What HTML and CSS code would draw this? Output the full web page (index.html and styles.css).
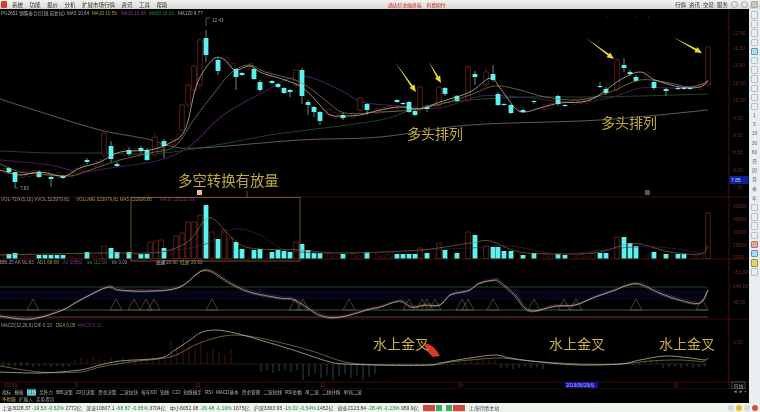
FILE: index.html
```html
<!DOCTYPE html>
<html lang="zh-CN">
<head>
  <meta charset="UTF-8" />
  <title>通达信金融终端</title>
  <link rel="stylesheet" href="styles.css">
</head>
<body>

  <!-- 顶部菜单 -->
  <header class="titlebar">
    <span class="app-logo"></span>
    <nav class="menu">
      <a>系统</a><a>功能</a><a>报价</a><a>分析</a><a>扩展市场行情</a><a>资讯</a><a>工具</a><a>帮助</a>
    </nav>
    <div class="title-center">通达信金融终端　利费期付</div>
    <nav class="menu-right">
      <a>行情</a><a>资讯</a><a>交易</a><a>服务</a>
    </nav>
    <div class="win-buttons">
      <span class="win-btn"></span><span class="win-btn"></span><span class="win-btn win-close"></span>
    </div>
  </header>

  <div class="main">
    <div class="left-col">
      <!-- K线图, 坐标直接用截图的像素 -->
      <svg id="chart" class="chart" viewBox="0 9 749 380" width="749" height="380"></svg>

      <div class="tabs">
        <div class="tab-row">
          <a>指标</a><a>模板</a><a class="on">短线</a><a>另外力</a><a>BBI决策</a><a>20日决策</a><a>资金决策</a><a>二波加快</a><a>每年KD</a><a>铂线</a><a>CCI</a><a>短线操手</a><a>RSI</a><a>MACD基本</a><a>资金管理</a><a>二波短线</a><a>RSI金额</a><a>单二波</a><a>二线并购</a><a>单纯二波</a>
        </div>
        <div class="tab-row">
          <a class="warn">不停服</a><a>扩展入</a><a>买卖提示</a>
        </div>
        <div class="period-nav">◄ ► ▪</div>
      </div>
    </div>

    <!-- 右侧工具条 -->
    <aside class="toolbar">
      <i class="tool"></i><i class="tool"></i><i class="tool"></i><i class="tool"></i><i class="tool tool-blue"></i><i class="tool"></i><i class="tool"></i><i class="tool"></i><i class="tool"></i><i class="tool"></i><i class="tool"></i>
      <b>1</b><b>5</b><b>15</b><b>30</b><b>60</b>
      <b>日</b><b>周</b><b>月</b><b>季</b><b>年</b>
      <i class="tool"></i><i class="tool"></i><i class="tool"></i>
      <i class="tool"></i><i class="tool tool-red"></i><i class="tool tool-blue"></i><i class="tool tool-yellow"></i><i class="tool"></i>
    </aside>
  </div>

  <!-- 底部指数 -->
  <footer class="statusbar">
    <span class="idx">上证3028.37 <em>-19.53</em> <em>-0.62%</em> 2772亿</span>
    <span class="idx">深证10607.1 <em>-68.87</em> <em>-0.65%</em> 3704亿</span>
    <span class="idx">中小6052.08 <em>-26.48</em> <em>-1.10%</em> 1675亿</span>
    <span class="idx">沪深3363.95 <em>-16.02</em> <em>-0.54%</em> 1452亿</span>
    <span class="idx">创业2123.84 <em>-28.46</em> <em>-1.23%</em> 959.9亿</span>
    <span class="mini-bars"><u class="up"></u><u class="down"></u></span>
    <span class="mini-bars"><u class="down"></u><u class="up"></u></span>
    <span class="idx">上海行情主站</span>
    <span class="tray"><i></i><i class="y"></i><i></i><i class="r"></i></span>
  </footer>

  <script src="chart.js"></script>
</body>
</html>
```

FILE: styles.css
```css
* {
  box-sizing: border-box;
}

html, body {
  margin: 0;
  padding: 0;
  width: 760px;
  height: 412px;
  overflow: hidden;
  background: #000;
}

body {
  display: flex;
  flex-direction: column;
  font-family: "Liberation Sans", "Noto Sans CJK SC", sans-serif;
  font-size: 5.5px;
}

.titlebar {
  height: 9px;
  display: flex;
  align-items: center;
  background: linear-gradient(#f2f2f0, #d8d8d4);
  color: #333;
  white-space: nowrap;
  filter: blur(0.35px);
}

.app-logo {
  width: 6px;
  height: 7px;
  margin: 0 5px 0 1px;
  background: #d8402c;
  border-radius: 1px;
}

.menu {
  display: flex;
  gap: 6.5px;
  width: 376px;
}

.title-center {
  width: 287px;
  font-size: 4.8px;
  color: #d0281c;
}

.menu-right {
  display: flex;
  gap: 3px;
}

.win-buttons {
  display: flex;
  gap: 3px;
  margin-left: 3px;
}

.win-btn {
  width: 7px;
  height: 7px;
  border: 1px solid #aaa;
  border-radius: 50%;
}

.win-close {
  border-radius: 1px;
  background: #c4c4c4;
}

.main {
  flex: 1;
  display: flex;
  min-height: 0;
}

.left-col {
  width: 749px;
  display: flex;
  flex-direction: column;
}

.chart {
  display: block;
  filter: blur(0.45px);
}

.legend {
  font-size: 4.6px;
}

.tabs {
  flex: 1;
  padding-left: 2px;
  background: #000;
  color: #b4b4b4;
  font-size: 4.6px;
  position: relative;
  filter: blur(0.3px);
}

.tab-row {
  display: flex;
  gap: 3.2px;
  height: 7px;
  line-height: 7px;
  white-space: nowrap;
}

.tab-row .on {
  background: #1c8c96;
  color: #e8ffff;
}

.tab-row .warn {
  color: #c8b84a;
}

.period-nav {
  position: absolute;
  top: 0;
  left: 733px;
  color: #999;
}

.toolbar {
  width: 11px;
  display: flex;
  flex-direction: column;
  align-items: center;
  gap: 1.7px;
  padding-top: 2px;
  background: #e8eef2;
  color: #666;
  filter: blur(0.5px);
}

.toolbar b {
  height: 7.5px;
  line-height: 7.5px;
  font-weight: normal;
  font-size: 5px;
}

.tool {
  width: 7px;
  height: 7.5px;
  border: 1px solid #b8c0c8;
  border-radius: 1px;
}

.tool-blue {
  border-color: #5a9ac0;
  background: #b4d8ec;
}

.tool-red {
  border-color: #b87060;
  background: #dcaca0;
}

.tool-yellow {
  border-color: #a89030;
  background: #e8d070;
}

.statusbar {
  height: 9px;
  display: flex;
  align-items: center;
  gap: 4px;
  padding-left: 2px;
  background: #eef3ee;
  color: #333;
  font-size: 5.1px;
  white-space: nowrap;
  filter: blur(0.3px);
}

.idx em {
  font-style: normal;
  color: #1a8a3a;
}

.mini-bars {
  display: flex;
  gap: 1px;
  width: 19px;
  height: 6px;
}

.mini-bars u {
  display: block;
  height: 100%;
}

.mini-bars .up {
  flex: 2;
  background: #d8463a;
}

.mini-bars .down {
  flex: 1;
  background: #3aa860;
}

.tray {
  display: flex;
  gap: 2px;
  margin-left: auto;
  padding-right: 2px;
}

.tray i {
  width: 6px;
  height: 6px;
  border-radius: 50%;
  background: #d8d8d8;
}

.tray .y {
  background: #d8c030;
}

.tray .r {
  background: #d85040;
}
```

FILE: chart.js
```js
const svg = document.getElementById("chart");
let out = "";

function rect(x, y, w, h, fill, stroke) {
  out += `<rect x="${x}" y="${y}" width="${w}" height="${h}" fill="${fill}"` +
    (stroke ? ` stroke="${stroke}" stroke-width="0.7"` : "") + "/>";
}
function line(x1, y1, x2, y2, color, w) {
  out += `<line x1="${x1}" y1="${y1}" x2="${x2}" y2="${y2}" stroke="${color}" stroke-width="${w || 0.7}"/>`;
}
// 均线用平滑曲线
function poly(p, color, w) {
  let d = `M${p[0][0]} ${p[0][1]}`;
  for (let i = 0; i < p.length - 1; i++) {
    const a = p[i - 1] || p[i], b = p[i], c = p[i + 1], e = p[i + 2] || c;
    const c1x = b[0] + (c[0] - a[0]) / 6, c1y = b[1] + (c[1] - a[1]) / 6;
    const c2x = c[0] - (e[0] - b[0]) / 6, c2y = c[1] - (e[1] - b[1]) / 6;
    d += ` C${c1x.toFixed(1)} ${c1y.toFixed(1)} ${c2x.toFixed(1)} ${c2y.toFixed(1)} ${c[0]} ${c[1]}`;
  }
  out += `<path fill="none" stroke="${color}" stroke-width="${w || 0.7}" d="${d}"/>`;
}
function text(x, y, str, color, size) {
  out += `<text x="${x}" y="${y}" fill="${color}" font-size="${size || 5}">${str}</text>`;
}
// polyline 上取 y 值
function valueAt(pts, x) {
  for (let i = 1; i < pts.length; i++) {
    if (x <= pts[i][0]) {
      const a = pts[i - 1], b = pts[i];
      return a[1] + (b[1] - a[1]) * (x - a[0]) / (b[0] - a[0]);
    }
  }
  return pts[pts.length - 1][1];
}

const RED = "#7c2a20";
const DIM_RED = "#4e1a14";
const GRID = "#5a1210";
const CYAN = "#5cf2f0";
const TAN = "#948650";
const AXIS = "#6e2a20";

// 均线
const ma5 = [[0,170],[20,175],[40,172],[60,176],[68,175],[80,168],[100,162],[120,152],[150,150],[170,143],[185,130],[195,90],[203,72],[215,58],[225,60],[235,70],[250,66],[262,73],[285,80],[303,88],[320,105],[330,115],[345,116],[360,115],[380,110],[400,107],[420,109],[440,102],[470,92],[490,78],[500,88],[515,108],[525,112],[540,108],[560,103],[590,100],[620,80],[640,72],[655,80],[680,87],[700,87],[708,80]];
const ma10 = [[0,164],[20,172],[40,174],[70,176],[90,170],[120,160],[150,153],[175,146],[195,118],[215,92],[232,72],[250,65],[265,72],[300,82],[325,100],[345,113],[380,112],[410,110],[445,103],[470,95],[495,86],[520,90],[545,97],[580,100],[610,92],[640,80],[670,83],[690,87],[708,82]];
const ma20 = [[0,160],[50,165],[80,172],[110,168],[160,160],[190,146],[222,116],[260,94],[300,76],[340,90],[362,102],[400,106],[440,108],[480,96],[520,97],[570,102],[610,98],[640,88],[680,88],[708,84]];
const ma60 = [[0,151],[50,153],[100,153],[150,154],[200,148],[270,135],[300,131],[380,120],[420,107],[470,100],[530,97],[590,97],[640,96],[708,94]];
const ma120 = [[0,99],[50,115],[100,130],[147,139],[170,146],[200,148],[300,140],[380,137],[470,125],[600,120],[708,110]];

// 阴线 [x, 实体上, 实体下, 影线上, 影线下]
const downs = [[9,168,172,167,174],[15,172,182,172,188],[39,172,177,170,178],[51,177,179,175,187],[63,176,178,175,179],[87,160,162,158,164],[111,146,159,141,162],[117,164,166,162,167],[129,150,154,147,156],[141,148,151,146,154],[147,150,160,148,161],[164,141,146,139,158],[206,38,55,30,62],[218,60,71,58,75],[236,69,77,68,90],[242,73,75,72,76],[254,69,79,68,80],[260,82,90,80,92],[272,81,83,80,84],[278,84,87,83,88],[284,88,93,87,94],[290,90,92,89,97],[302,70,96,68,104],[308,102,105,100,115],[314,107,112,106,117],[320,112,121,111,125],[343,115,118,113,120],[367,104,110,103,115],[397,100,102,99,103],[403,103,104,102,105],[409,102,112,101,113],[415,111,115,110,116],[427,107,109,105,112],[445,88,94,87,96],[457,96,101,95,102],[475,74,77,71,85],[493,74,80,65,82],[498,94,105,92,106],[504,104,105,103,106],[511,105,113,104,114],[523,110,112,109,113],[534,101,102,100,104],[558,96,104,95,106],[565,105,106,104,107],[600,86,87,82,88],[606,89,93,87,95],[624,65,68,58,72],[630,72,74,70,76],[636,77,81,75,82],[654,82,88,80,90],[666,89,91,88,96],[678,88,89,87,90],[684,88,89,87,90],[690,88,89,87,90]];
// 阳线 [x, 上, 下, 影线上, 影线下]
const ups = [[104,133,155,130,158],[155,137,155,133,158],[182,105,130,103,132],[188,85,105,83,108],[194,66,90,64,95],[200,40,85,38,90],[296,70,85,69,88],[360,98,110,96,113],[420,87,110,86,113],[439,87,105,86,107],[468,67,100,65,102],[486,72,85,68,88],[617,60,90,58,92],[708,47,85,47,86]];

// 分割线
[197, 259, 319, 382, 389].forEach(y => line(0, y, 749, y, GRID));
line(729, 9, 729, 389, "#6a1a16");

// 主图均线
poly(ma120, "#85857a", 0.7);
poly(ma60, "#24582c", 0.8);
poly(ma20, "#441c50", 1.1);

// K线
for (let x = 3; x < 706; x += 6) {
  const used = downs.concat(ups).some(c => Math.abs(c[0] - x) < 3.2);
  if (used) continue;
  const y = valueAt(ma5, x);
  line(x + 2, y - 4, x + 2, y + 4, DIM_RED, 0.5);
  rect(x, y - 2.5, 4, 5, "#000", DIM_RED);
}
ups.forEach(c => {
  line(c[0], c[3], c[0], c[4], RED, 0.6);
  rect(c[0] - 2.2, c[1], 4.4, c[2] - c[1], "#000", RED);
});
downs.forEach(c => {
  line(c[0], c[3], c[0], c[4], "#8cc0c0", 0.7);
  rect(c[0] - 2.4, c[1], 4.8, c[2] - c[1], CYAN);
});

poly(ma10, TAN, 0.7);
poly(ma5, "#d0d0c4", 0.7);

// 最高最低标注
line(206, 18, 206, 26, "#aaa", 0.5);
line(206, 18, 210, 18, "#aaa", 0.5);
text(212, 22, "12.43", "#999", 4.6);
line(15, 188, 18, 188, "#aaa", 0.5);
text(20, 190, "7.80", "#999", 4.6);

[606, 636, 648].forEach(x => rect(x, 17, 1, 1, "#444"));
rect(197, 190, 5, 5, "#e8b8b0");
rect(645, 190, 5, 5, "#556");
line(247, 191, 247, 197, "#a03020", 1);

// 图例
out += `<text class="legend" y="14.5">
  <tspan x="1" fill="#aaa">PG2651 钢鹰泰合(日线,前复权)</tspan>
  <tspan x="67" fill="#aaa">MA5 10.64</tspan>
  <tspan x="92" fill="#a89a40">MA10 10.59</tspan>
  <tspan x="121" fill="#8a3498">MA20 10.08</tspan>
  <tspan x="149" fill="#308040">MA60 10.03</tspan>
  <tspan x="178" fill="#aaa">MA120 9.77</tspan>
</text>`;
out += `<text class="legend" y="201">
  <tspan x="1" fill="#999">VOL-TDX(5,10) VVOL 523979.81</tspan>
  <tspan x="76" fill="#a89a40">VOLUME 523979.81 MA5 132936.80</tspan>
  <tspan x="160" fill="#7a3088">MA10 105250.61</tspan>
</text>`;
out += `<text class="legend" y="264">
  <tspan x="0" fill="#999">BBI.25 AK 91.83</tspan>
  <tspan x="37" fill="#a89a40">AD1 68.68</tspan>
  <tspan x="63" fill="#8a3498">AJ 10501</tspan>
  <tspan x="87" fill="#308040">aa 112.00</tspan>
  <tspan x="112" fill="#999">bb 0.00</tspan>
  <tspan x="156" fill="#ccc">高通</tspan>
  <tspan x="166" fill="#999">20.00</tspan>
  <tspan x="180" fill="#a89a40">低通</tspan>
  <tspan x="191" fill="#999">20.00</tspan>
</text>`;
out += `<text class="legend" y="327">
  <tspan x="1" fill="#999">MACD(12,26,9) DIF 0.13</tspan>
  <tspan x="56" fill="#a89a40">DEA 0.05</tspan>
  <tspan x="78" fill="#7a3088">MACD 0.11</tspan>
</text>`;

// 成交量
const volDown = [[9,254],[15,253],[39,255],[45,255],[51,255],[57,255],[63,255],[87,252],[111,248],[117,252],[129,252],[141,254],[147,254],[164,248],[206,205],[218,239],[236,242],[242,249],[254,250],[260,249],[272,252],[278,250],[284,251],[290,252],[302,244],[308,250],[314,253],[320,253],[343,254],[367,252],[397,254],[403,254],[409,254],[415,254],[427,253],[445,250],[457,253],[475,235],[493,247],[498,247],[504,251],[511,251],[523,255],[534,253],[558,254],[565,255],[600,253],[606,253],[624,237],[630,243],[636,246],[654,252],[666,254],[678,254],[684,254]];
const volUp = [[104,246],[150,242],[156,241],[161,240],[176,236],[182,233],[188,222],[194,222],[200,215],[212,232],[224,230],[230,238],[296,242],[420,248],[439,243],[468,232],[486,246],[617,237],[708,213]];
for (let x = 3; x < 706; x += 6) {
  const used = volDown.concat(volUp).some(c => Math.abs(c[0] - x) < 3.2);
  if (!used) rect(x, 253 + (x * 7 % 4), 4, 5.5 - (x * 7 % 4), "#000", DIM_RED);
}
volUp.forEach(c => rect(c[0] - 2.2, c[1], 4.4, 258.5 - c[1], "#000", RED));
volDown.forEach(c => rect(c[0] - 2.4, c[1], 4.8, 258.5 - c[1], CYAN));
poly([[0,255],[100,253],[150,253],[170,250],[190,240],[205,220],[215,220],[230,236],[250,248],[300,250],[340,253],[420,250],[470,243],[490,241],[520,252],[570,254],[600,252],[624,245],[640,244],[670,252],[700,254],[708,246]], TAN, 0.6);
poly([[140,254],[200,246],[225,232],[240,229],[260,235],[280,248],[300,252],[360,253],[470,248],[510,246],[560,254],[620,248],[660,247],[705,254]], "#4a2058", 0.6);
// 放量框
rect(131, 197.5, 169, 63.5, "none", "#8c7838");

// KDJ 区
rect(0, 290, 708, 10, "#05051a");
line(0, 287, 708, 287, "#28582c", 0.8);
line(0, 310, 708, 310, "#7a7040", 0.7);
line(0, 317, 708, 317, "#6c6c62", 0.7);
[33,116,134,146,154,212,295,303,349,409,422,427,435,462,468,493,534,564,576,636,702].forEach(x => {
  out += `<polygon points="${x - 6},310 ${x},299 ${x + 6},310" fill="none" stroke="#736a42" stroke-width="0.6"/>`;
});
const kd = [[0,316],[30,319],[60,311],[75,303],[90,295],[108,287],[120,290],[150,291],[180,287],[205,270],[230,283],[250,292],[280,298],[295,300],[320,315],[340,317],[370,309],[380,307],[400,301],[412,307],[425,305],[440,305],[450,295],[462,292],[470,290],[480,283],[495,280],[500,282],[515,295],[525,308],[535,311],[555,306],[575,305],[595,297],[615,290],[628,285],[640,284],[660,293],[680,300],[700,303],[708,290]];
poly(kd.map(p => [p[0] + 1, p[1] - 1.5]), "#4e2658", 0.6);
poly(kd.map(p => [p[0] - 1, p[1] + 0.8]), "#807440", 0.6);
poly(kd, "#c8c8bc", 0.7);

// MACD
const dif = [[0,372],[40,373],[80,370],[100,365],[120,361],[160,358],[175,350],[190,340],[200,333],[215,330],[235,333],[260,340],[290,349],[305,354],[330,362],[345,364],[380,365],[430,365],[440,363],[470,358],[495,355],[510,358],[540,362],[580,365],[620,364],[640,360],[665,356],[690,358],[705,360],[708,358]];
const dea = [[0,366],[40,372],[80,372],[100,367],[130,362],[170,357],[195,345],[215,338],[235,335],[260,338],[290,345],[315,352],[345,362],[380,365],[430,365],[450,362],[470,360],[500,358],[530,361],[580,364],[620,364],[650,361],[680,360],[705,362]];
line(0, 364, 708, 364, "#3c3c34", 0.5);
// 柱子: [起, 止, 上方高度, 下方高度]
const bars = [[3,30,3,3],[33,72,0,3],[75,170,7,0],[170,206,26,0],[206,236,16,0],[258,300,0,9],[300,376,0,16],[376,455,1,1],[455,500,6,0],[500,545,0,5],[545,640,1,1],[640,660,5,0],[660,706,0,4]];
for (let x = 3; x < 706; x += 6) {
  const b = bars.find(r => x >= r[0] && x < r[1]);
  if (!b) continue;
  const wob = (x * 13 % 5) / 4;
  if (b[2]) line(x, 364, x, 364 - b[2] * (0.6 + wob * 0.4), "#6a2a20", 0.6);
  if (b[3]) line(x, 364, x, 364 + b[3] * (0.6 + wob * 0.4), "#52707e", 0.6);
}
poly(dea, "#948650", 0.7);
poly(dif, "#c8c8bc", 0.7);

// 底部日期
[[75, "9"], [195, "10"], [320, "12"], [458, "18"], [673, "15"]].forEach(d => text(d[0], 387, d[1], "#6e2a20", 4.6));
text(4, 387, "2019年", "#6e2a20", 4.6);
rect(565, 382, 33, 6, "#10109a");
text(566, 387, "2019/06/29(6)", "#b8b8ff", 4.6);
rect(732, 382, 13, 7, "none", "#666");
text(733.5, 387.5, "日线", "#aaa", 5);

// 右侧坐标
[[12.5, 35], [11.5, 50], [11, 67], [10.5, 84.5], [10, 102], [9.5, 119.5], [9, 137], [8.5, 154], [8, 171.5], [7.5, 189]].forEach(p => {
  text(733, p[1], p[0].toFixed(2), AXIS);
});
rect(729.5, 176, 19, 8, "#10209a");
text(731, 182, "7.85", "#c8d8ff");
[["60000", 208], ["45000", 221], ["30000", 234], ["15000", 247], ["0000", 259]].forEach(p => text(733, p[1], p[0], AXIS));
[["150.00", 274], ["140.00", 288], ["90.00", 304], ["0.50", 344]].forEach(p => text(733, p[1], p[0], AXIS));

// 箭头
[[395,62,416,92],[429,62,441,83],[586,38,614,59],[673,37,702,53]].forEach(a => {
  const dx = a[2] - a[0], dy = a[3] - a[1], len = Math.hypot(dx, dy);
  const ux = dx / len, uy = dy / len, nx = -uy, ny = ux;
  const bx = a[2] - ux * 7, by = a[3] - uy * 7;
  out += `<polygon fill="#e8dc30" points="${a[0]},${a[1]} ${bx + nx},${by + ny} ${bx + nx * 3},${by + ny * 3} ${a[2]},${a[3]} ${bx - nx * 3},${by - ny * 3} ${bx - nx},${by - ny}"/>`;
});

// 红色弯箭头
out += `<path d="M424 343 Q434 344 440 356 L433 357 Q426 352 424 343Z" fill="#d8362c"/>`;

// 注释文字
text(178, 186, "多空转换有放量", "#c2a83a", 14.4);
text(407, 139, "多头排列", "#c2a83a", 14);
text(601, 128, "多头排列", "#c2a83a", 14);
text(373, 349, "水上金叉", "#c8b040", 14);
text(549, 349, "水上金叉", "#c8b040", 14);
text(659, 349, "水上金叉", "#c8b040", 14);

svg.innerHTML = out;
```
